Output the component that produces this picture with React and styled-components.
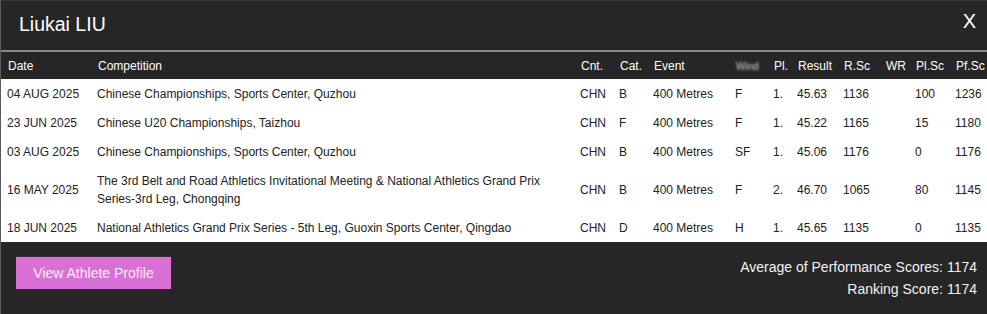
import React from "react";
import styled, { createGlobalStyle } from "styled-components";

const GlobalStyle = createGlobalStyle`
  html, body {
    margin: 0;
    padding: 0;
    background: #262626;
  }
  * {
    box-sizing: border-box;
  }
`;

const Modal = styled.div`
  width: 987px;
  height: 314px;
  background: #262626;
  border-left: 1px solid #5a5a5a;
  border-top: 1px solid #3a3a3a;
  font-family: "Liberation Sans", Arial, sans-serif;
  display: flex;
  flex-direction: column;
  overflow: hidden;
`;

const TitleBar = styled.div`
  height: 51px;
  display: flex;
  align-items: center;
  justify-content: space-between;
  padding: 0 11px 2px 18px;
  border-bottom: 2px solid #8a8a8a;
`;

const Title = styled.h1`
  margin: 0;
  font-size: 19.5px;
  font-weight: 400;
  color: #fff;
`;

const Close = styled.button`
  background: none;
  border: none;
  padding: 0;
  color: #fff;
  font-family: "Liberation Sans", Arial, sans-serif;
  font-size: 20px;
  cursor: pointer;
  margin-top: -6px;
`;

const Table = styled.table`
  width: 986px;
  border-collapse: collapse;
  table-layout: fixed;
  font-size: 12px;
`;

const Th = styled.th`
  height: 27px;
  padding: 0 0 0 7px;
  text-align: left;
  font-weight: 400;
  color: #fff;
  background: #262626;
  white-space: nowrap;
`;

const Td = styled.td`
  padding: 6px ${(p) => (p.$wide ? "22px" : "0")} 5px 6px;
  color: #222;
  background: #fff;
  line-height: 18px;
  vertical-align: middle;
  white-space: ${(p) => (p.$wide ? "normal" : "nowrap")};
`;

const Blurred = styled.span`
  display: inline-block;
  color: #d8d8d8;
  font-size: 10px;
  filter: blur(1.3px);
`;

const Footer = styled.div`
  flex: 1;
  display: flex;
  justify-content: space-between;
  align-items: flex-start;
  padding: 14px 10px 0 14px;
`;

const ProfileButton = styled.button`
  width: 157px;
  height: 34px;
  background: #d970d6;
  border: 1px solid #3a2238;
  color: #fbeefa;
  font-family: "Liberation Sans", Arial, sans-serif;
  font-size: 14px;
  cursor: pointer;
`;

const Scores = styled.div`
  display: flex;
  flex-direction: column;
  align-items: flex-end;
  gap: 4px;
  padding-top: 2px;
`;

const ScoreLine = styled.div`
  color: #f2f2f2;
  font-size: 14px;
  line-height: 18px;
`;

const widths = [90, 483, 39, 34, 82, 38, 24, 46, 42, 30, 40, 38];

const rows = [
  ["04 AUG 2025", "Chinese Championships, Sports Center, Quzhou", "CHN", "B", "400 Metres", "F", "1.", "45.63", "1136", "", "100", "1236"],
  ["23 JUN 2025", "Chinese U20 Championships, Taizhou", "CHN", "F", "400 Metres", "F", "1.", "45.22", "1165", "", "15", "1180"],
  ["03 AUG 2025", "Chinese Championships, Sports Center, Quzhou", "CHN", "B", "400 Metres", "SF", "1.", "45.06", "1176", "", "0", "1176"],
  ["16 MAY 2025", "The 3rd Belt and Road Athletics Invitational Meeting & National Athletics Grand Prix Series-3rd Leg, Chongqing", "CHN", "B", "400 Metres", "F", "2.", "46.70", "1065", "", "80", "1145"],
  ["18 JUN 2025", "National Athletics Grand Prix Series - 5th Leg, Guoxin Sports Center, Qingdao", "CHN", "D", "400 Metres", "H", "1.", "45.65", "1135", "", "0", "1135"],
];

const headers = ["Date", "Competition", "Cnt.", "Cat.", "Event", null, "Pl.", "Result", "R.Sc", "WR", "Pl.Sc", "Pf.Sc"];

export default function App() {
  return (
    <>
      <GlobalStyle />
      <Modal>
        <TitleBar>
          <Title>Liukai LIU</Title>
          <Close>X</Close>
        </TitleBar>
        <Table>
          <colgroup>
            {widths.map((w, i) => (
              <col key={i} style={{ width: w }} />
            ))}
          </colgroup>
          <thead>
            <tr>
              {headers.map((h, i) => (
                <Th key={i}>{h === null ? <Blurred>Wind</Blurred> : h}</Th>
              ))}
            </tr>
          </thead>
          <tbody>
            {rows.map((r, i) => (
              <tr key={i}>
                {r.map((c, j) => (
                  <Td key={j} $wide={j === 1}>
                    {c}
                  </Td>
                ))}
              </tr>
            ))}
          </tbody>
        </Table>
        <Footer>
          <ProfileButton>View Athlete Profile</ProfileButton>
          <Scores>
            <ScoreLine>Average of Performance Scores: 1174</ScoreLine>
            <ScoreLine>Ranking Score: 1174</ScoreLine>
          </Scores>
        </Footer>
      </Modal>
    </>
  );
}
